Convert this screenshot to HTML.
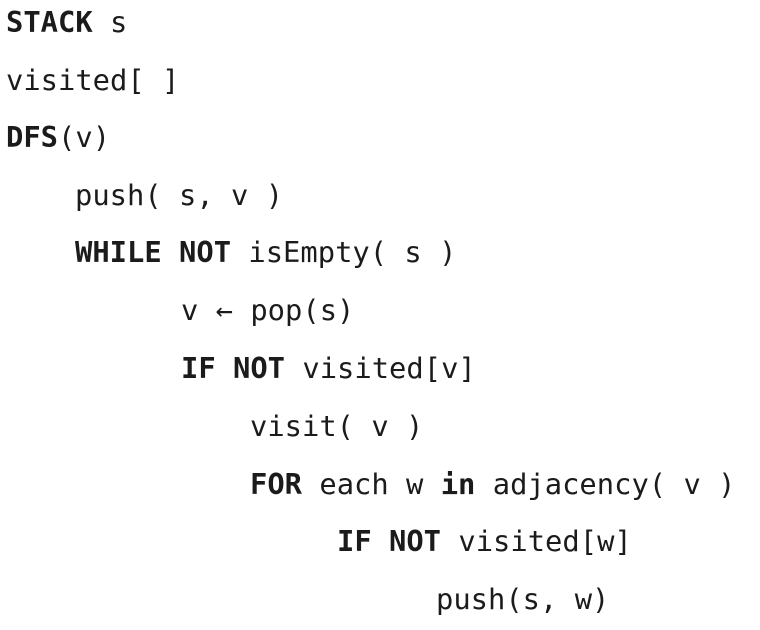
<!DOCTYPE html>
<html><head><style>
html,body{margin:0;padding:0;background:#fff;width:760px;height:630px;overflow:hidden}
div.l{position:absolute;font-family:"DejaVu Sans Mono","Liberation Mono",monospace;font-size:28.8px;line-height:34px;color:#1b1b1b;white-space:pre}
b{font-weight:bold}
</style></head><body>
<div class="l" style="left:6px;top:5px"><b>STACK</b> s</div>
<div class="l" style="left:6px;top:63px">visited[ ]</div>
<div class="l" style="left:6px;top:120px"><b>DFS</b>(v)</div>
<div class="l" style="left:75px;top:178px">push( s, v )</div>
<div class="l" style="left:75px;top:235px"><b>WHILE NOT</b> isEmpty( s )</div>
<div class="l" style="left:181px;top:293px">v ← pop(s)</div>
<div class="l" style="left:181px;top:351px"><b>IF NOT</b> visited[v]</div>
<div class="l" style="left:250px;top:409px">visit( v )</div>
<div class="l" style="left:250px;top:467px"><b>FOR</b> each w <b>in</b> adjacency( v )</div>
<div class="l" style="left:337px;top:524px"><b>IF NOT</b> visited[w]</div>
<div class="l" style="left:436px;top:582px">push(s, w)</div>
</body></html>
